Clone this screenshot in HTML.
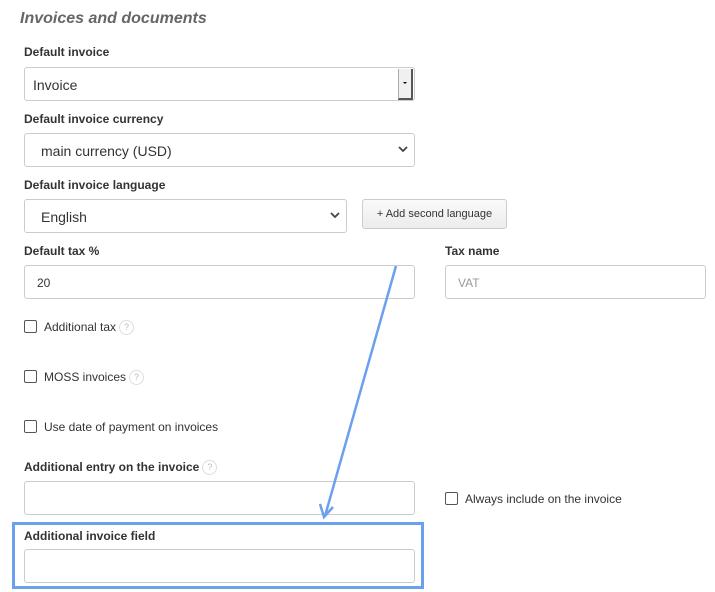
<!DOCTYPE html>
<html><head><style>
body{margin:0;width:715px;height:592px;background:#fff;font-family:"Liberation Sans",sans-serif;position:relative;overflow:hidden;color:#333}
.a{position:absolute}
h1{position:absolute;left:20px;top:10px;margin:0;font-size:16px;font-style:italic;font-weight:bold;color:#666}
.lbl{position:absolute;font-size:12px;font-weight:bold;color:#333}
.in{position:absolute;border:1px solid #ccc;border-radius:3px;box-sizing:border-box;background:#fff;font-size:14px;color:#333}
.chk{position:absolute;width:13px;height:13px;border:1px solid #555;border-radius:2px;box-sizing:border-box}
.ct{position:absolute;font-size:12px;color:#333}
.q{display:inline-block;width:13px;height:13px;border:1px solid #ddd;border-radius:50%;font-size:9px;color:#bbb;text-align:center;line-height:13px;vertical-align:middle;margin-left:3px;font-weight:normal}
.chev{position:absolute;right:6px;top:11px}
</style></head><body>
<h1>Invoices and documents</h1>
<div class="lbl" style="left:24px;top:45px">Default invoice</div>
<div class="in" style="left:24px;top:67px;width:391px;height:34px;padding:9px 8px">Invoice</div>
<div class="a" style="left:398px;top:69px;width:15px;height:31px;background:#f0f0f0;border-left:1px solid #aaa;border-right:2px solid #555;border-bottom:2px solid #555;box-sizing:border-box"><div class="a" style="left:4px;top:13px;width:0;height:0;border-left:2px solid transparent;border-right:2px solid transparent;border-top:2px solid #000"></div></div>
<div class="lbl" style="left:24px;top:112px">Default invoice currency</div>
<div class="in" style="left:24px;top:133px;width:391px;height:34px;padding:9px 16px">main currency (USD)<svg class="chev" width="10" height="8"><path d="M1 2 L5 6 L9 2" stroke="#444" stroke-width="1.8" fill="none"/></svg></div>
<div class="lbl" style="left:24px;top:178px">Default invoice language</div>
<div class="in" style="left:24px;top:199px;width:323px;height:34px;padding:9px 16px">English<svg class="chev" width="10" height="8"><path d="M1 2 L5 6 L9 2" stroke="#444" stroke-width="1.8" fill="none"/></svg></div>
<div class="in" style="left:362px;top:199px;width:145px;height:30px;background:linear-gradient(#fafafa,#ececec);font-size:11px;text-align:center;line-height:28px">+ Add second language</div>
<div class="lbl" style="left:24px;top:244px">Default tax %</div>
<div class="lbl" style="left:445px;top:244px">Tax name</div>
<div class="in" style="left:24px;top:265px;width:391px;height:34px;padding:10px 12px;font-size:12px">20</div>
<div class="in" style="left:445px;top:265px;width:261px;height:34px;padding:10px 12px;font-size:12px;color:#999">VAT</div>
<div class="chk" style="left:24px;top:320px"></div><div class="ct" style="left:44px;top:320px">Additional tax<span class="q">?</span></div>
<div class="chk" style="left:24px;top:370px"></div><div class="ct" style="left:44px;top:370px">MOSS invoices<span class="q">?</span></div>
<div class="chk" style="left:24px;top:420px"></div><div class="ct" style="left:44px;top:420px">Use date of payment on invoices</div>
<div class="lbl" style="left:24px;top:460px">Additional entry on the invoice<span class="q">?</span></div>
<div class="in" style="left:24px;top:481px;width:391px;height:34px"></div>
<div class="chk" style="left:445px;top:492px"></div><div class="ct" style="left:465px;top:492px">Always include on the invoice</div>
<div class="a" style="left:12px;top:522px;width:412px;height:67px;border:3px solid #6b9ff0;box-sizing:border-box"></div>
<div class="lbl" style="left:24px;top:529px">Additional invoice field</div>
<div class="in" style="left:24px;top:549px;width:391px;height:34px"></div>
<svg class="a" style="left:0;top:0" width="715" height="592"><path d="M396 266 L325 516 M320 504 L324 517 L333 507" stroke="#6b9ff0" stroke-width="2.5" fill="none"/></svg>
</body></html>
